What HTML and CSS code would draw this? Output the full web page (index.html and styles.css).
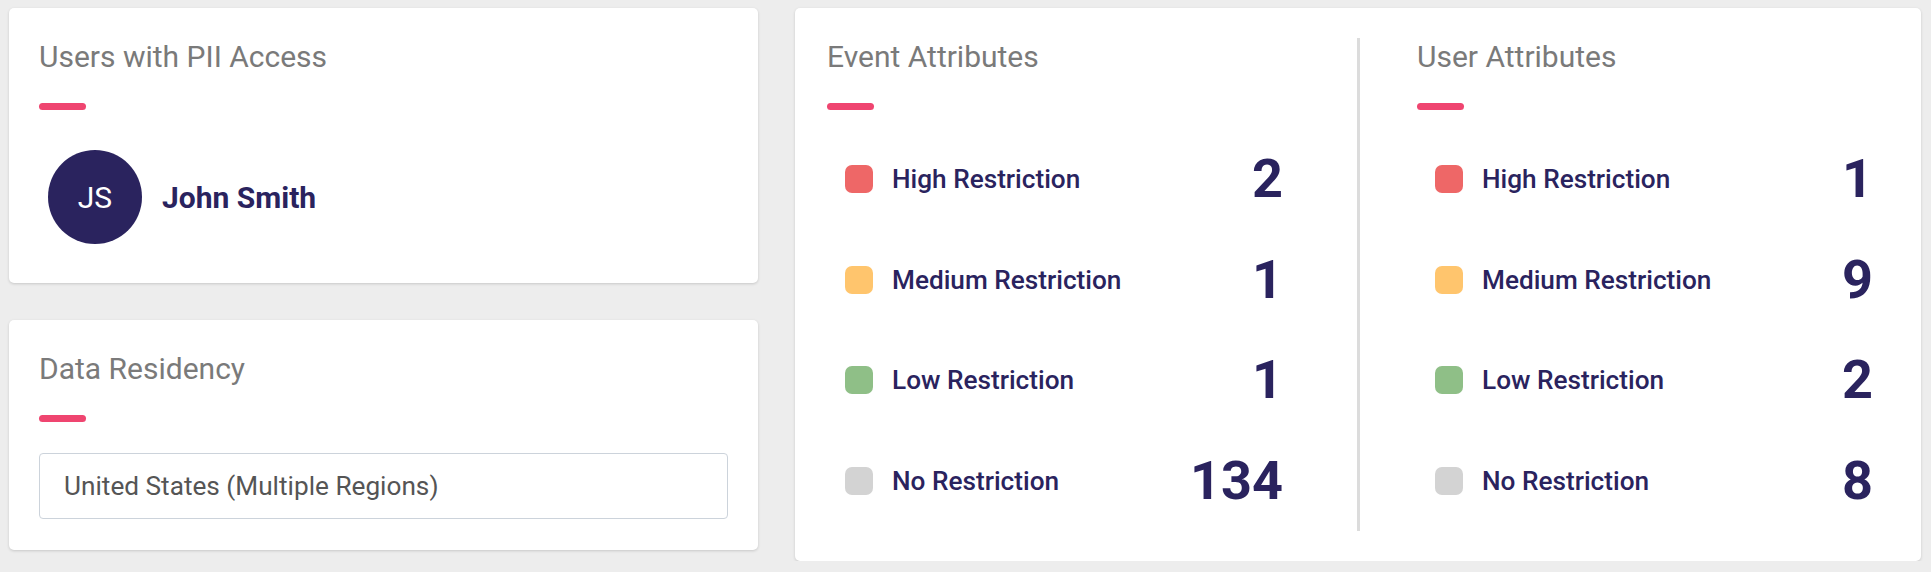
FILE: index.html
```html
<!DOCTYPE html>
<html lang="en">
<head>
<meta charset="utf-8">
<title>PII Overview</title>
<link rel="stylesheet" href="styles.css">
</head>
<body>
<div class="page">
  <div class="left-col">
    <section class="card card-users">
      <h2 class="card-title">Users with PII Access</h2>
      <div class="accent"></div>
      <div class="user">
        <div class="avatar">JS</div>
        <div class="user-name">John Smith</div>
      </div>
    </section>
    <section class="card card-residency">
      <h2 class="card-title">Data Residency</h2>
      <div class="accent"></div>
      <div class="field">United States (Multiple Regions)</div>
    </section>
  </div>
  <section class="card card-attrs">
    <div class="attr-col">
      <h2 class="card-title">Event Attributes</h2>
      <div class="accent"></div>
      <ul class="rows">
        <li class="row"><span class="dot dot-high"></span><span class="label">High Restriction</span><span class="count">2</span></li>
        <li class="row"><span class="dot dot-medium"></span><span class="label">Medium Restriction</span><span class="count">1</span></li>
        <li class="row"><span class="dot dot-low"></span><span class="label">Low Restriction</span><span class="count">1</span></li>
        <li class="row"><span class="dot dot-none"></span><span class="label">No Restriction</span><span class="count">134</span></li>
      </ul>
    </div>
    <div class="divider"></div>
    <div class="attr-col">
      <h2 class="card-title">User Attributes</h2>
      <div class="accent"></div>
      <ul class="rows">
        <li class="row"><span class="dot dot-high"></span><span class="label">High Restriction</span><span class="count">1</span></li>
        <li class="row"><span class="dot dot-medium"></span><span class="label">Medium Restriction</span><span class="count">9</span></li>
        <li class="row"><span class="dot dot-low"></span><span class="label">Low Restriction</span><span class="count">2</span></li>
        <li class="row"><span class="dot dot-none"></span><span class="label">No Restriction</span><span class="count">8</span></li>
      </ul>
    </div>
  </section>
</div>
</body>
</html>
```
FILE: styles.css
```css
* { box-sizing: border-box; }

html, body {
  margin: 0;
  padding: 0;
  background: #ededed;
  font-family: Roboto, "Liberation Sans", Arial, sans-serif;
}

.page {
  display: flex;
  align-items: flex-start;
  gap: 37px;
  padding: 8px 10px 0 9px;
}

.left-col {
  width: 750px;
  display: flex;
  flex-direction: column;
  gap: 37px;
}

.card {
  background: #ffffff;
  border-radius: 5px;
  box-shadow: 0 1px 3px rgba(0, 0, 0, 0.16);
}

.card-users {
  padding: 31px 30px 39px 30px;
}

.card-residency {
  padding: 31px 30px 31px 30px;
}

.card-title {
  margin: 0;
  font-size: 30px;
  line-height: 35px;
  font-weight: 400;
  color: #7a7a7a;
  white-space: nowrap;
}

.accent {
  width: 47px;
  height: 7px;
  border-radius: 4px;
  background: #ef4570;
  margin-top: 29px;
}

.user {
  display: flex;
  align-items: center;
  gap: 20px;
  margin-top: 40px;
  padding-left: 9px;
}

.avatar {
  width: 94px;
  height: 94px;
  border-radius: 50%;
  background: #2a235e;
  color: #ffffff;
  display: flex;
  align-items: center;
  justify-content: center;
  font-size: 30px;
  font-weight: 400;
}

.user-name {
  font-size: 30px;
  font-weight: 700;
  color: #2a235e;
}

.field {
  margin-top: 31px;
  height: 66px;
  border: 1px solid #ccd3db;
  border-radius: 4px;
  padding: 0 24px;
  display: flex;
  align-items: center;
  font-size: 26.2px;
  color: #555555;
}

.card-attrs {
  flex: 1;
  display: flex;
  padding: 31px 48px 30px 32px;
}

.attr-col {
  width: 456px;
}

.divider {
  width: 3px;
  background: #dcdcdc;
  margin: -1px 57px 0 74px;
}

.rows {
  list-style: none;
  margin: 19px 0 0 0;
  padding: 0 0 0 18px;
}

.row {
  height: 100.5px;
  display: flex;
  align-items: center;
}

.dot {
  width: 28px;
  height: 28px;
  border-radius: 7px;
  flex: none;
}

.dot-high { background: #ee6767; }
.dot-medium { background: #ffc56d; }
.dot-low { background: #8fbf87; }
.dot-none { background: #d3d3d3; }

.label {
  margin-left: 19px;
  font-size: 26.2px;
  font-weight: 500;
  color: #2a235e;
  flex: 1;
}

.count {
  font-size: 54px;
  font-weight: 700;
  color: #2a235e;
  line-height: 1;
}
```
